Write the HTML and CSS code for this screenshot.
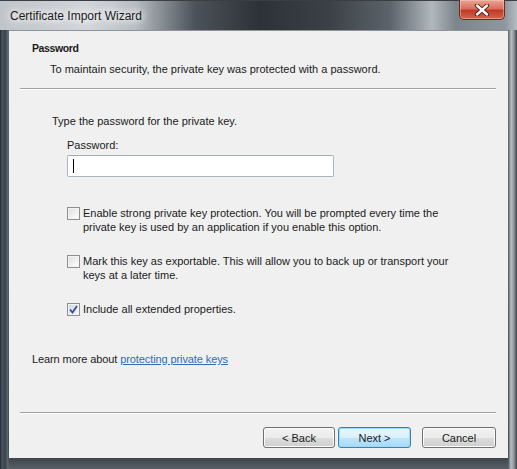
FILE: index.html
```html
<!DOCTYPE html>
<html lang="en">
<head>
    <meta charset="UTF-8">
    <meta name="viewport" content="width=device-width, initial-scale=1.0">
    <title>Certificate Import Wizard</title>
    <link rel="stylesheet" href="styles.css">
</head>
<body>
    <div class="window">
        <div class="titlebar">
            <span class="title">Certificate Import Wizard</span>
            <div class="close">
                <svg width="16" height="12" viewBox="0 0 16 12">
                    <path d="M3 1.5 L13 10.5 M13 1.5 L3 10.5" stroke="#4a1410" stroke-width="4.2" stroke-linecap="round"/>
                    <path d="M3 1.5 L13 10.5 M13 1.5 L3 10.5" stroke="#ffffff" stroke-width="2.4" stroke-linecap="round"/>
                </svg>
            </div>
        </div>

        <div class="client">
            <div class="header">
                <div class="heading">Password</div>
                <div class="subtitle">To maintain security, the private key was protected with a password.</div>
            </div>
            <div class="sep"></div>

            <div class="content">
                <div class="prompt">Type the password for the private key.</div>
                <div class="field">
                    <label for="pw">Password:</label>
                    <div class="input" id="pw"><span class="caret"></span></div>
                </div>

                <div class="options">
                    <div class="option">
                        <span class="box"></span>
                        <span>Enable strong private key protection. You will be prompted every time the<br>private key is used by an application if you enable this option.</span>
                    </div>
                    <div class="option">
                        <span class="box"></span>
                        <span>Mark this key as exportable. This will allow you to back up or transport your<br>keys at a later time.</span>
                    </div>
                    <div class="option">
                        <span class="box checked">
                            <svg width="9" height="9" viewBox="0 0 9 9">
                                <path d="M1 4.5 L3.5 7.5 L8 1" fill="none" stroke="#3c4f8c" stroke-width="1.8"/>
                            </svg>
                        </span>
                        <span>Include all extended properties.</span>
                    </div>
                </div>

                <div class="learn">Learn more about <a href="#">protecting private keys</a></div>
            </div>

            <div class="sep"></div>
            <div class="buttons">
                <button class="btn back">&lt; Back</button>
                <button class="btn next">Next &gt;</button>
                <button class="btn cancel">Cancel</button>
            </div>
        </div>
    </div>
</body>
</html>
```

FILE: styles.css
```css
body {
    margin: 0;
    background: #ffffff;
    font-family: "Liberation Sans", Arial, sans-serif;
    font-size: 11px;
    color: #1b1b1b;
}
.window {
    width: 517px;
    height: 469px;
    box-sizing: border-box;
    padding: 0 9px 11px 9px;
    display: flex;
    flex-direction: column;
    background:
        linear-gradient(to right, #22272c 0, #4a545e 2px, #38424c 5px, #5d6770 8px, transparent 9px, transparent 508px, #6d747b 509px, #b8bfc5 511px, #8c949b 514px, #3a3f45 517px),
        linear-gradient(to bottom, #6a737c 0, #4a535c 60%, #2b3137 96%, #596068 100%);
}
.titlebar {
    height: 30px;
    margin: 0 -9px;
    padding: 0 12px 0 10px;
    display: flex;
    justify-content: space-between;
    align-items: flex-start;
    border-top: 1px solid #3a3f45;
    box-sizing: border-box;
    background: linear-gradient(to right, #bfc4c9 0, #d2d6da 90px, #b7bdc3 135px, #4b5259 195px, #2c3237 260px, #3b4147 330px, #5c646b 390px, #b0b7bd 432px, #7d858c 456px, #8f979e 505px, #b5bcc2 517px);
}
.title {
    margin-top: 8px;
    font-size: 12px;
    color: #1a1a1a;
    text-shadow: 0 0 6px #ffffff, 0 0 10px #ffffff, 0 0 14px rgba(255, 255, 255, 0.9);
}
.close {
    width: 46px;
    height: 20px;
    margin-top: -1px;
    box-sizing: border-box;
    border: 1px solid #6e2a22;
    border-top: none;
    border-radius: 0 0 5px 5px;
    background: linear-gradient(to bottom, #e9a594 0, #d9705e 45%, #c13a27 55%, #d2664c 100%);
    box-shadow: inset 0 0 0 1px rgba(255, 210, 200, 0.45);
    display: flex;
    align-items: center;
    justify-content: center;
}
.client {
    flex: 1;
    background: #f0f0f0;
    display: flex;
    flex-direction: column;
    border-top: 1px solid #8d949a;
}
.header {
    height: 57px;
    box-sizing: border-box;
    padding: 10px 0 0 23px;
}
.heading {
    font-size: 10.5px;
    font-weight: bold;
    line-height: 14px;
    letter-spacing: -0.4px;
}
.subtitle {
    padding: 7px 0 0 18px;
    line-height: 14px;
}
.sep {
    margin: 0 12px 0 11px;
    height: 1px;
    border-top: 1px solid #a0a0a0;
    background: #ffffff;
}
.content {
    flex: 1;
    padding: 24px 0 0 23px;
}
.prompt {
    margin: 0 0 10px 20px;
    line-height: 14px;
}
.field {
    margin-left: 35px;
    display: flex;
    flex-direction: column;
    gap: 3px;
}
.field label {
    line-height: 14px;
}
.input {
    width: 267px;
    height: 22px;
    box-sizing: border-box;
    border: 1px solid #abb6c3;
    border-top-color: #a3adba;
    border-radius: 2px;
    background: #ffffff;
    display: flex;
    align-items: center;
    padding-left: 5px;
}
.caret {
    width: 1px;
    height: 14px;
    background: #000000;
}
.options {
    margin: 29px 0 0 35px;
    display: flex;
    flex-direction: column;
    gap: 20px;
}
.option {
    display: flex;
    gap: 3px;
    line-height: 14px;
}
.box {
    width: 13px;
    height: 13px;
    margin-top: 1px;
    box-sizing: border-box;
    flex-shrink: 0;
    border: 1px solid #8e8f8f;
    background: linear-gradient(135deg, #dcdcdc 0, #f2f2f2 60%, #ffffff 100%);
    box-shadow: inset 0 0 0 1px #f4f4f4;
    display: flex;
    align-items: center;
    justify-content: center;
}
.box.checked {
    background: linear-gradient(135deg, #c9d6ee 0, #e6ecf7 70%, #ffffff 100%);
}
.learn {
    margin-top: 36px;
    line-height: 14px;
    letter-spacing: -0.1px;
}
.learn a {
    color: #2f6db4;
}
.buttons {
    height: 44px;
    box-sizing: border-box;
    padding: 13px 12px 0 0;
    display: flex;
    justify-content: flex-end;
    align-items: flex-start;
}
.btn {
    height: 21px;
    padding: 0;
    font-family: "Liberation Sans", Arial, sans-serif;
    font-size: 11px;
    color: #1b1b1b;
    border: 1px solid #707070;
    border-radius: 3px;
    background: linear-gradient(to bottom, #f2f2f2 0, #ebebeb 50%, #dddddd 51%, #cfcfcf 100%);
    box-shadow: inset 0 0 0 1px #fcfcfc;
}
.back {
    width: 72px;
}
.next {
    width: 73px;
    margin-left: 3px;
    border-color: #3c7fb1;
    box-shadow: inset 0 0 0 1px #9ed9f6;
    background: linear-gradient(to bottom, #eaf6fd 0, #d9f0fc 50%, #bee6fd 51%, #a7d9f5 100%);
}
.cancel {
    width: 74px;
    margin-left: 11px;
}
```
